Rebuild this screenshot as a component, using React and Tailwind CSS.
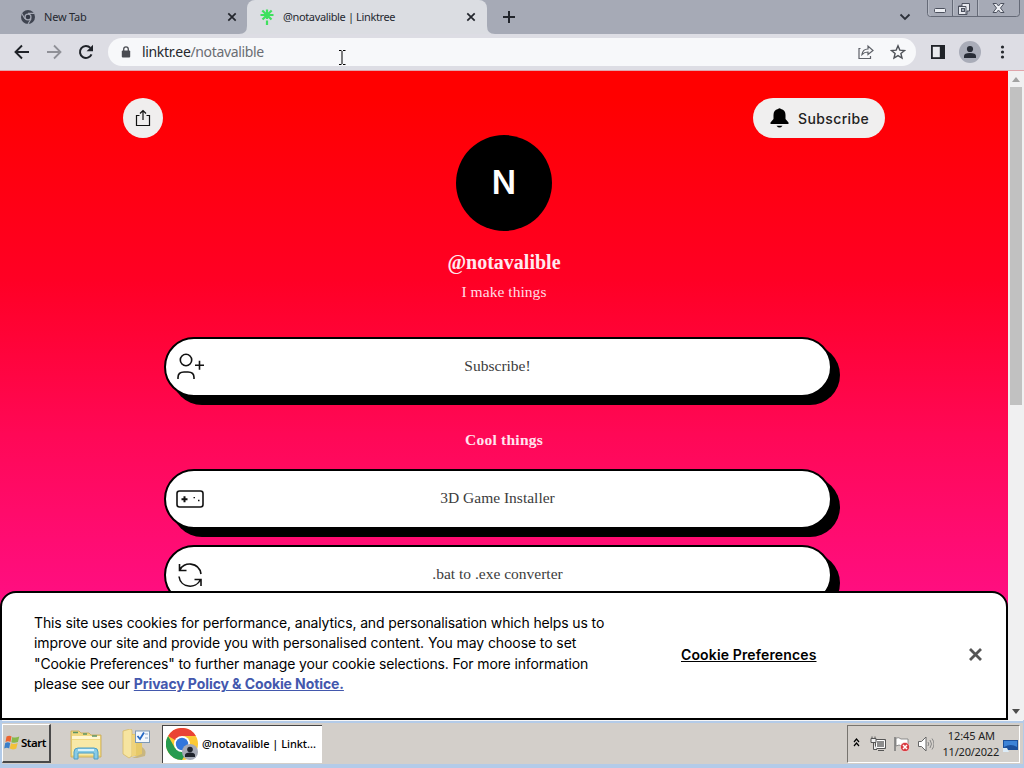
import React from 'react';

const ui = "font-['Noto_Sans',sans-serif]";

function ChromeMark() {
  return (
    <svg className="h-4 w-4 shrink-0" viewBox="0 0 16 16" fill="none">
      <circle cx="8" cy="8" r="7" fill="#3f4450" />
      <circle cx="8" cy="8" r="3.6" fill="#a6aab6" />
      <circle cx="8" cy="8" r="2.3" fill="#343946" />
      <path d="M8 4.4h6.3M4.9 9.8 1.8 4.4M11.1 9.8 8 15" stroke="#a6aab6" strokeWidth="1.1" />
    </svg>
  );
}

function LinktreeMark() {
  return (
    <svg className="h-4 w-4 shrink-0" viewBox="0 0 16 16" fill="none" stroke="#3fe05e" strokeWidth="2.2">
      <path d="M8 .5v9.500M1.500 6h13M3.300 1.500 12.500 10.500M12.700 1.500 3.500 10.500M8 11.500V16" />
    </svg>
  );
}

function CloseX() {
  return (
    <svg className="h-[10px] w-[10px] shrink-0" viewBox="0 0 10 10" stroke="#22252c" strokeWidth="1.7">
      <path d="m1.3 1.3 7.4 7.4m0-7.4-7.4 7.4" />
    </svg>
  );
}

function WindowButtons() {
  return (
    <svg className="h-[18px] w-[94px]" viewBox="0 0 94 18" fill="none">
      <path d="M.5 0v13.5q0 3 3 3h86q3 0 3-3V0M25.5 0v16M50.5 0v16" stroke="#656a77" />
      <path d="M1.5 0v13q0 2.500 2 2.500M26.500 0v15M51.500 0v15" stroke="#bfc2cc" strokeOpacity=".7" />
      <rect x="7.500" y="8.500" width="11" height="4" rx="1" fill="#eceef3" stroke="#4c515e" />
      <path d="M35 3.500h7.500V11H40v3.500h-8.500V6H35z" fill="#e6e8ee" stroke="#4c515e" />
      <path d="M31.500 6.500H39V14" stroke="#4c515e" />
      <rect x="34.500" y="8.500" width="3" height="3" fill="#a6aab6" stroke="#4c515e" />
      <path d="M66 3.500h3.500l2 2.500 2-2.500H77l-3.500 4.500 3.500 4.500h-3.500l-2-2.500-2 2.500H66L69.500 8z" fill="#eceef3" stroke="#4c515e" />
    </svg>
  );
}

function TabStrip() {
  return (
    <div className={`flex h-[34px] bg-[#a6aab6] text-[11px] text-[#252830] ${ui}`}>
      <div className="flex w-[247px] items-center pr-[10px] pl-5">
        <ChromeMark />
        <span className="ml-2 grow tracking-[-0.2px] whitespace-nowrap">New Tab</span>
        <CloseX />
      </div>
      <div className="relative flex w-[240px] items-center rounded-t-lg bg-[#dbdde2] pr-[11px] pl-3">
        <svg className="absolute bottom-0 -left-2 h-2 w-2" viewBox="0 0 8 8"><path d="M8 0v8H0q8 0 8-8" fill="#dbdde2" /></svg>
        <svg className="absolute -right-2 bottom-0 h-2 w-2" viewBox="0 0 8 8"><path d="M0 0v8h8Q0 8 0 0" fill="#dbdde2" /></svg>
        <LinktreeMark />
        <span className="ml-2 grow whitespace-nowrap tracking-[-0.36px]">@notavalible | Linktree</span>
        <CloseX />
      </div>
      <div className="flex grow items-center pl-4">
        <svg className="h-3 w-3" viewBox="0 0 12 12" stroke="#22252c" strokeWidth="2"><path d="M6 0v12M0 6h12" /></svg>
      </div>
      <svg className="mt-[13px] mr-[16px] h-[8px] w-[12px]" viewBox="0 0 12 8" fill="none" stroke="#2c3039" strokeWidth="1.8"><path d="m1.500 1.500 4.500 4.500 4.500-4.500" /></svg>
      <WindowButtons />
      <div className="w-[3px]" />
    </div>
  );
}

function Toolbar() {
  return (
    <div className="flex h-[37px] items-center border-b border-[#e0a5ab] bg-[#dddde4]">
      <svg className="ml-[14px] h-4 w-4" viewBox="0 0 16 16" fill="none" stroke="#1f2228" strokeWidth="1.900"><path d="M15 8H2M8 1.500 1.500 8 8 14.500" /></svg>
      <svg className="ml-4 h-4 w-4" viewBox="0 0 16 16" fill="none" stroke="#8f9097" strokeWidth="1.800"><path d="M1 8h13M8 1.500 14.500 8 8 14.500" /></svg>
      <svg className="ml-4 h-4 w-4" viewBox="0 0 16 16" fill="none"><path d="M13.500 10.300A6 6 0 1 1 12.400 3.900" stroke="#1f2228" strokeWidth="2" /><path d="M15 .8v6.400H8.600z" fill="#1f2228" /></svg>
      <div className="relative ml-[14px] flex h-7 w-[808px] items-center rounded-full bg-[#f7f8fa] pr-[10px] pl-[13px]">
        <svg className="h-3 w-[10px]" viewBox="0 0 10 12" fill="none"><rect x=".8" y="4.500" width="8.400" height="7" rx="1" fill="#4a4c52" /><path d="M2.700 5V3.200a2.300 2.300 0 0 1 4.600 0V5" stroke="#4a4c52" strokeWidth="1.300" /></svg>
        <span className={`ml-[11px] grow pb-[2px] text-[14px] tracking-[-0.34px] whitespace-nowrap text-[#6a6d73] ${ui}`}><span className="text-[#26282d]">linktr.ee</span>/notavalible</span>
        <svg className="absolute top-[12px] left-[230px] h-[15px] w-2" viewBox="0 0 8 15" fill="none" stroke="#000"><path d="M1 .5h2.500M5 .5h2.500M4 1v13M1 14.500h2.500M5 14.500h2.500" /></svg>
        <svg className="h-4 w-4" viewBox="0 0 16 16" fill="none" stroke="#5e6168" strokeWidth="1.200"><path d="M2.500 4.500H1v10h11.500V12M4 10.500c.5-4 3-5.500 6-5.500V2l5 4.500-5 4V8c-3 0-4.500.8-6 2.500z" /></svg>
        <svg className="ml-4 h-4 w-4" viewBox="0 0 16 16" fill="none" stroke="#4e5157" strokeWidth="1.400"><path d="m8 1.800 1.800 4.300 4.700.4-3.600 3 1.100 4.600L8 11.600l-4 2.500 1.100-4.600-3.600-3 4.700-.4z" /></svg>
      </div>
      <svg className="ml-[15px] h-[14px] w-[14px]" viewBox="0 0 14 14"><path d="M0 0h14v14H0z" fill="#202328" /><path d="M1.800 1.800h7v10.400h-7z" fill="#e9eaee" /></svg>
      <svg className="ml-[14px] h-[22px] w-[22px]" viewBox="0 0 22 22"><circle cx="11" cy="11" r="11" fill="#a9acb8" /><circle cx="11" cy="8" r="3.100" fill="#282c36" /><path d="M5 17v-2q0-3 6-3t6 3v2z" fill="#282c36" /></svg>
      <svg className="ml-[19px] h-[14px] w-[5px]" viewBox="0 0 5 14" fill="#25282d"><circle cx="2.500" cy="2" r="1.600" /><circle cx="2.500" cy="7" r="1.600" /><circle cx="2.500" cy="12" r="1.600" /></svg>
    </div>
  );
}

function LinkButton({ icon, children }) {
  return (
    <div className="flex h-[60px] w-[668px] shrink-0 items-center rounded-full border-2 border-black bg-white pr-[41px] pl-[8px] text-[15.5px] text-[#3c3c3c] shadow-[8px_8px_0_#000]">
      <svg className="h-8 w-8 shrink-0" viewBox="0 0 32 32" fill="none" stroke="#111" strokeWidth="1.600">{icon}</svg>
      <span className="grow pb-[3px] text-center">{children}</span>
    </div>
  );
}

const personIcon = <><circle cx="12" cy="9" r="5.700" /><path d="M4 28v-1.500q0-5.500 6-5.500h4q6 0 6 5.500V28M25.500 9.800v9M21 14.300h9" /></>;
const gameIcon = <><rect x="3" y="8" width="26" height="16" rx="2.500" /><path d="M10.500 13.200v6M7.500 16.200h6" strokeWidth="2" /><path d="M19.500 14.700h1.500M24 17.500h1.500" strokeWidth="1.300" /></>;
const syncIcon = <><path d="M5.500 5v6.500h7M6 11C9 2.500 25 2.500 27 15M5 17.500c1.500 11.500 17 13 21.500 3M20.500 20.500h6.500V27" /></>;

function CookieBanner() {
  return (
    <div className="absolute inset-x-0 bottom-0 flex h-[129px] rounded-t-2xl border-2 border-black bg-white font-['Inter',sans-serif] text-black">
      <div className="w-[615px] pt-[20px] pl-8 text-[14px] leading-[20.4px] whitespace-nowrap">
        <p className="tracking-[-0.125px]">This site uses cookies for performance, analytics, and personalisation which helps us to</p>
        <p className="tracking-[-0.09px]">improve our site and provide you with personalised content. You may choose to set</p>
        <p className="tracking-[-0.13px]">"Cookie Preferences" to further manage your cookie selections. For more information</p>
        <p className="tracking-[-0.09px]">please see our <span className="font-bold text-[#4358ad] underline">Privacy Policy &amp; Cookie Notice.</span></p>
      </div>
      <div className="flex grow items-start justify-between pt-[52px] pr-[24px] pl-[64px]">
        <span className="text-[14px] leading-5 font-semibold tracking-[0.14px] whitespace-nowrap underline">Cookie Preferences</span>
        <svg className="mt-[3px] h-[13px] w-[13px]" viewBox="0 0 13 13" stroke="#555" strokeWidth="2.800"><path d="m1 1 11 11M12 1 1 12" /></svg>
      </div>
    </div>
  );
}

function Page() {
  return (
    <main className="relative flex w-[1008px] flex-col overflow-hidden bg-[linear-gradient(180deg,#ff0000_4%,#ff0024_32%,#ff0856_56%,#ff0f86_84%)] pt-[27px] font-['Liberation_Serif',serif]">
      <div className="flex h-10 shrink-0 justify-between px-[123px]">
        <div className="flex h-10 w-10 items-center justify-center rounded-full bg-[#f0eeee]">
          <svg className="h-[18px] w-4" viewBox="0 0 16 18" fill="none" stroke="#111" strokeWidth="1.200"><path d="M4.500 6.500h-3v10h13v-10h-3M8 11V1.500M5 4.500l3-3 3 3" /></svg>
        </div>
        <div className="flex h-10 w-[132px] items-center rounded-full bg-[#f0efef] pl-[17px] font-['Inter',sans-serif] text-[14px] font-medium text-[#222]">
          <svg className="h-5 w-[19px]" viewBox="0 0 19 20" fill="#000"><path d="M8 1q1.500-1.500 3 0 4.500.8 4.500 6v4l3 3.500v1.500H.5v-1.500l3-3.500V7Q3.500 1.800 8 1M6.500 17.700h6q-3 3.800-6 0" /></svg>
          <span className="ml-[9px] pt-px tracking-[0.38px]">Subscribe</span>
        </div>
      </div>
      <div className="mt-[-3px] flex h-24 w-24 shrink-0 items-center justify-center self-center rounded-full bg-black font-['Inter',sans-serif] text-[32px] font-semibold text-white">N</div>
      <h1 className="mt-[19px] h-6 shrink-0 text-center text-[20px] leading-6 font-bold text-[#ffe9ee]">@notavalible</h1>
      <p className="mt-[8px] h-5 shrink-0 text-center text-[15.500px] leading-5 tracking-[0.05px] text-[#ffdce3]">I make things</p>
      <div className="mt-[35px] flex flex-col pl-[164px]">
        <LinkButton icon={personIcon}>Subscribe!</LinkButton>
        <h2 className="flex h-[72px] w-[680px] items-center justify-center pt-[13px] text-[15.500px] font-bold tracking-[0.25px] text-[#ffe4ee]">Cool things</h2>
        <LinkButton icon={gameIcon}>3D Game Installer</LinkButton>
        <div className="mt-4"><LinkButton icon={syncIcon}>.bat to .exe converter</LinkButton></div>
      </div>
      <CookieBanner />
    </main>
  );
}

function Scrollbar() {
  return (
    <div className="flex w-4 flex-col items-center bg-[#f0f0f1]">
      <svg className="mt-[6px] h-[5px] w-2" viewBox="0 0 8 5"><path d="M0 5l4-5 4 5z" fill="#a2a2a2" /></svg>
      <div className="mt-[5px] h-[318px] w-3 bg-[#c1c1c1]" />
      <div className="grow" />
      <svg className="mb-[6px] h-[5px] w-2" viewBox="0 0 8 5"><path d="M0 0h8L4 5z" fill="#4d4d4d" /></svg>
    </div>
  );
}

function StartFlag() {
  return (
    <svg className="h-4 w-4 shrink-0" viewBox="0 0 16 16">
      <path d="M2.500 1.500q3-1.500 5 0L6.500 7q-2.500-1.300-5 0z" fill="#ec6430" />
      <path d="M8.300 2q3 1.400 7-.5l-1.400 5.500q-3.500 1.500-6.600.3z" fill="#88b84a" />
      <path d="M1.200 8q2.500-1.300 5 0l-1 5.500q-2.500-1.500-5 0z" fill="#3b7fc9" />
      <path d="M7 8.300q3 1.300 6.700-.3l-1.400 5.500q-3.500 1.700-6.500.1z" fill="#f3c13a" />
    </svg>
  );
}

function ChromeProfile() {
  return (
    <svg className="h-8 w-8 shrink-0" viewBox="0 0 32 32">
      <circle cx="16" cy="16" r="16" fill="#fcc934" />
      <path d="M16 16 2.100 8A16 16 0 0 1 29.900 8H16z" fill="#ea4335" />
      <path d="M2.100 8A16 16 0 0 0 16 32l7-12-7-4-7 4z" fill="#279b4f" />
      <circle cx="16" cy="16" r="8" fill="#fff" />
      <circle cx="16" cy="16" r="6.200" fill="#3276dc" />
      <circle cx="24" cy="24" r="8" fill="#a5a9b5" />
      <circle cx="24" cy="21.500" r="2.800" fill="#20242d" />
      <path d="M19 29v-2q0-2.500 5-2.500t5 2.500v2z" fill="#20242d" />
    </svg>
  );
}

function Explorer() {
  return (
    <svg className="h-[30px] w-8" viewBox="0 0 32 30">
      <path d="M1 1h8l2 2h8l2 2h10v22H1z" fill="#f1d982" stroke="#c9a84e" strokeWidth=".8" />
      <path d="M2 6h28v3H2z" fill="#fff6d1" />
      <path d="M3 2.500h5M13 4h4M22 6h5" stroke="#5c9465" strokeWidth="1.500" />
      <path d="M2 10h28v15H2z" fill="#f8e9a7" />
      <path d="M4 29v-7q0-4 4-4h16q4 0 4 4v7h-4v-6H8v6z" fill="#88cbe6" stroke="#4e9ec5" />
      <path d="M8 20h16" stroke="#d8f3fc" strokeWidth="2" />
    </svg>
  );
}

function FolderTasks() {
  return (
    <svg className="h-[30px] w-[29px]" viewBox="0 0 29 30">
      <path d="M8 5h12v22H8z" fill="#e6c969" />
      <path d="M1 2 8 0q2 0 2 2v25l-3 2-6-4z" fill="#f6e4a0" stroke="#d4b65d" strokeWidth=".7" />
      <path d="M10 6h4v20l-4 2z" fill="#efd37b" />
      <path d="M20 18q5 3 3 9l-8 2h-5l10-4z" fill="#c8b681" />
      <rect x="13.500" y="2" width="14" height="11.500" fill="#f3f8fc" stroke="#7c99b5" />
      <path d="m15.500 7 2.500 3L22 3.500" fill="none" stroke="#2368c4" strokeWidth="1.800" />
      <path d="M23 5h3M23 9h3" stroke="#8fa9c5" />
    </svg>
  );
}

function Tray() {
  return (
    <div className="flex h-[38px] w-[173px] items-center border border-t-[#77746f] border-r-white border-b-white border-l-[#77746f] pl-[5px]">
      <svg className="mb-[2px] h-[9px] w-[7px]" viewBox="0 0 7 9" fill="none" stroke="#000" strokeWidth="1.200"><path d="m1 4 2.500-3L6 4M1 8l2.500-3L6 8" /></svg>
      <svg className="ml-[10px] h-4 w-4" viewBox="0 0 16 16"><path d="M5.500 3.500h10v9h-10z" fill="#8d8d8d" stroke="#555" /><path d="M6.500 4.500h8v7h-8z" fill="none" stroke="#fff" /><path d="M8 14.500h6M1 2.500h5v4H1zM2 .5v2M5 .5v2M3.500 7v6.500H7" fill="#eee" stroke="#555" /></svg>
      <svg className="ml-2 h-4 w-4" viewBox="0 0 16 16"><path d="M1 1v14" stroke="#777" strokeWidth="1.500" /><path d="M2 2q3-1 5 1h7v7H8q-3-2-6 0z" fill="#fff" stroke="#777" strokeWidth=".8" /><circle cx="11" cy="11" r="4.600" fill="#d83b40" stroke="#fff" strokeWidth=".5" /><path d="m9 9 4 4m0-4-4 4" stroke="#fff" strokeWidth="1.500" /></svg>
      <svg className="ml-2 h-4 w-4" viewBox="0 0 16 16" fill="none"><path d="M.5 5.500h3L8 1v14l-4.500-4.500h-3z" fill="#fff" stroke="#666" /><path d="M10 6q1.500 2 0 4M12 4q3 4 0 8M14 2.500q4 5.500 0 11" stroke="#888" /></svg>
      <div className={`ml-[8px] w-[57px] pt-px text-right text-[11px] leading-4 whitespace-nowrap text-[#222] ${ui}`}>
        <div className="pr-[4px] tracking-[-0.1px]">12:45 AM</div><div className="tracking-[-0.2px]">11/20/2022</div>
      </div>
      <svg className="mt-1 ml-[4px] h-3 w-[15px]" viewBox="0 0 15 12"><path d="M0 0h15v10H0z" fill="#1c4f9b" /><path d="M1 1h13v6Q8 3 1 7z" fill="#3d83d7" /><path d="M0 8h4l2 4H0z" fill="#dcecf8" /></svg>
    </div>
  );
}

function Taskbar() {
  return (
    <footer className={`h-12 bg-[#b3cbe8] pr-px pl-[2px] ${ui}`}>
      <div className="h-px bg-[#f5f6f8]" />
      <div className="mt-[2px] flex h-[41px] items-center bg-[#d3cfca]">
        <div className="flex h-[39px] w-[49px] items-center border-t border-r-2 border-b-2 border-l border-t-white border-r-[#494949] border-b-[#494949] border-l-white bg-[#d0cdc8] pl-px text-[11.500px] font-semibold text-black">
          <StartFlag /><span className="ml-px tracking-[-0.5px]">Start</span>
        </div>
        <div className="ml-[19px] pt-[3px]"><Explorer /></div>
        <div className="ml-[20px]"><FolderTasks /></div>
        <div className="ml-[11px] flex h-[38px] w-[160px] items-center border-t border-l border-[#454545] bg-white pl-[3px] text-[11px] font-medium whitespace-nowrap text-black">
          <ChromeProfile /><span className="ml-[4px] pt-px tracking-[-0.05px]">@notavalible | Linkt...</span>
        </div>
        <div className="grow" />
        <Tray />
        <div className="w-[3px]" />
      </div>
    </footer>
  );
}

export default function App() {
  return (
    <div className="flex h-[768px] w-[1024px] flex-col overflow-hidden">
      <TabStrip />
      <Toolbar />
      <div className="flex h-[649px]"><Page /><Scrollbar /></div>
      <Taskbar />
    </div>
  );
}
